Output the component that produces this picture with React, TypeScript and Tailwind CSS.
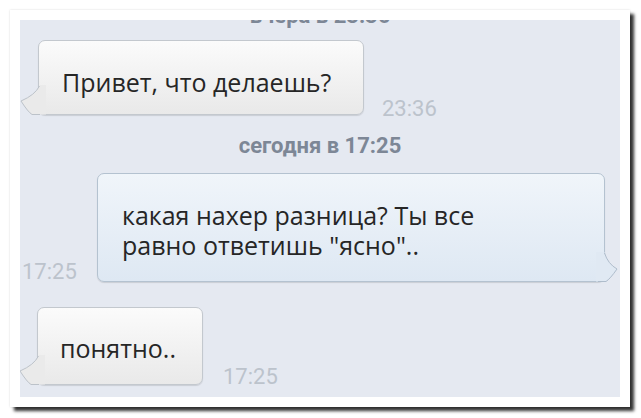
const font = { fontFamily: "Roboto, 'Noto Sans', sans-serif" };
const msgFont = { fontFamily: "'Open Sans', 'Noto Sans', sans-serif" };

function TailLeft({ fill }: { fill: string }) {
  return (
    <svg className="absolute left-[-19px] bottom-[-1px]" width="26" height="30" viewBox="0 0 26 30">
      <path d="M19.5 0 L26 0 L26 29.5 L12 29.5 Q8 27 1 16 Q15 10 19.5 1 Z" fill={fill} />
      <path d="M19.5 1 Q15 10 1 16 Q8 27 12 29.5 L20 29.5" fill="none" stroke="#bcc2c9" strokeWidth="1" />
    </svg>
  );
}

function TailRight({ fill }: { fill: string }) {
  return (
    <svg className="absolute right-[-14px] bottom-[-1px]" width="22" height="30" viewBox="0 0 22 30">
      <path d="M8.5 0 L0 0 L0 29.5 L10 29.5 Q14 27 21 17 Q12 12 8.5 1 Z" fill={fill} />
      <path d="M8.5 1 Q12 12 21 17 Q14 27 10 29.5 L2 29.5" fill="none" stroke="#aebccb" strokeWidth="1" />
    </svg>
  );
}

export default function App() {
  return (
    <div className="w-[641px] h-[418px] bg-white pt-[10px] pl-[10px]" style={font}>
      <div className="w-[620px] h-[397px] bg-white p-[10px] shadow-[4px_4px_3px_rgba(0,0,0,0.8),0_0_2px_rgba(0,0,0,0.15)]">
        <div className="h-full bg-[#e5e9f1] overflow-hidden flex flex-col">
          <div className="mt-[-17px] text-center text-[22px] leading-[26px] font-bold text-[#7d8796]">
            вчера в 23:36
          </div>

          <div className="mt-[11px] flex items-end">
            <div className="relative ml-[18px] w-[326px] h-[75px] rounded-[7px] border border-[#c3c8ce] bg-gradient-to-b from-[#fbfbfb] to-[#e9e9e9] shadow-[0_1px_1px_rgba(0,0,0,0.12)] pl-[23px] pt-[26px]">
              <TailLeft fill="#eaeaea" />
              <p className="text-[25px] leading-[30px] text-[#262626]" style={msgFont}>Привет, что делаешь?</p>
            </div>
            <span className="ml-[18px] mb-[-5px] text-[22px] leading-none text-[#bcc3cc]">23:36</span>
          </div>

          <div className="mt-[18px] text-center text-[22px] leading-[26px] font-bold text-[#7d8796]">
            сегодня в 17:25
          </div>

          <div className="mt-[14px] flex items-end">
            <span className="ml-[2px] mb-[-1px] text-[22px] leading-none text-[#bcc3cc]">17:25</span>
            <div className="relative ml-auto mr-[15px] w-[508px] h-[109px] rounded-[7px] border border-[#b4c2d0] bg-gradient-to-b from-[#f0f5fa] to-[#dee8f3] shadow-[0_1px_1px_rgba(0,0,0,0.12)] pl-[24px] pt-[26px]">
              <TailRight fill="#e0e9f3" />
              <p className="text-[25px] leading-[30px] text-[#262626]" style={msgFont}>
                какая нахер разница? Ты все
                <br />
                равно ответишь "ясно"..
              </p>
            </div>
          </div>

          <div className="mt-[25px] flex items-end">
            <div className="relative ml-[17px] w-[166px] h-[78px] rounded-[7px] border border-[#c3c8ce] bg-gradient-to-b from-[#fbfbfb] to-[#e9e9e9] shadow-[0_1px_1px_rgba(0,0,0,0.12)] pl-[22px] pt-[25px]">
              <TailLeft fill="#eaeaea" />
              <p className="text-[25px] leading-[30px] text-[#262626]" style={msgFont}>понятно..</p>
            </div>
            <span className="ml-[20px] mb-[-3px] text-[22px] leading-none text-[#bcc3cc]">17:25</span>
          </div>
        </div>
      </div>
    </div>
  );
}
